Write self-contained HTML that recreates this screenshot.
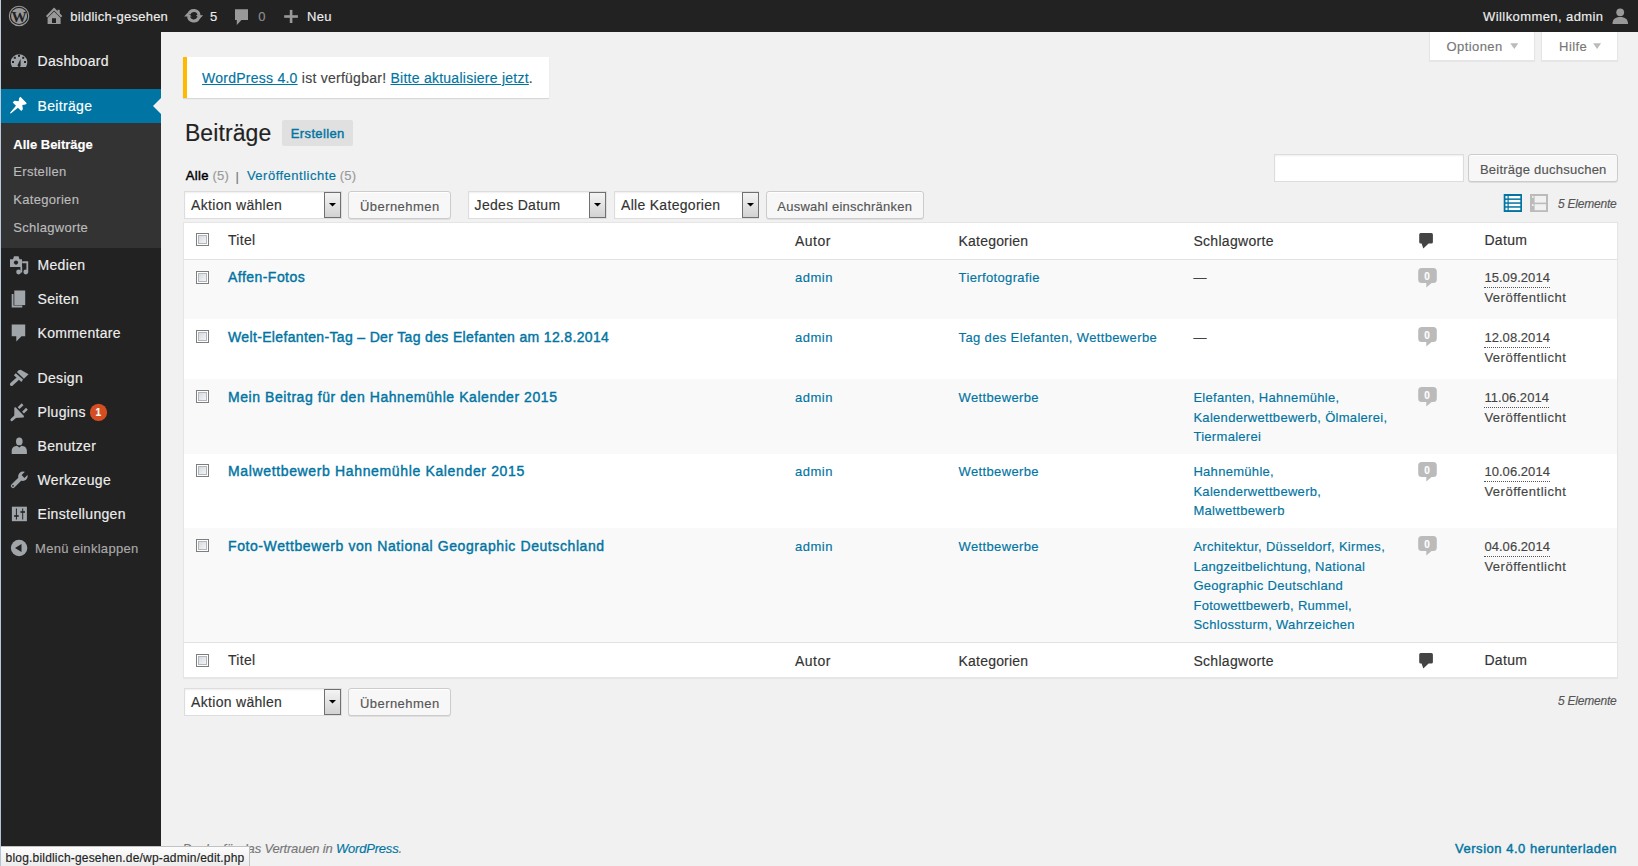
<!DOCTYPE html>
<html><head><meta charset="utf-8"><title>Beiträge</title>
<style>
html,body{margin:0;padding:0}
body{width:1638px;height:866px;overflow:hidden;position:relative;background:#f1f1f1;font-family:"Liberation Sans", sans-serif}
.r{position:absolute}
.t{position:absolute;line-height:1;white-space:nowrap;-webkit-text-stroke-width:0.15px}
.t a{color:#0074a2;text-decoration:none}
.u a{text-decoration:underline}
#ic{position:absolute;left:0;top:0}
#status{position:absolute;left:1px;top:846px;width:249px;height:20px;background:linear-gradient(#fcfcfc,#ececec);border-top:1px solid #c2c2c2;border-right:1px solid #c2c2c2;box-sizing:border-box}
</style></head><body>
<div class="r" style="left:0px;top:0px;width:1px;height:866px;background:linear-gradient(#bccadc,#b4c3d8)"></div><div class="r" style="left:1px;top:0px;width:1637px;height:32px;background:#222"></div><div class="r" style="left:1px;top:32px;width:160px;height:834px;background:#222"></div><div class="r" style="left:1px;top:89px;width:160px;height:34px;background:#0074a2"></div><div class="r" style="left:1px;top:123px;width:160px;height:125px;background:#333"></div><div class="r" style="left:1429px;top:32px;width:106px;height:29px;background:#fff;border:1px solid #e5e5e5;border-top:0;box-sizing:border-box;box-shadow:0 1px 1px rgba(0,0,0,.04)"></div><div class="r" style="left:1541px;top:32px;width:77px;height:29px;background:#fff;border:1px solid #e5e5e5;border-top:0;box-sizing:border-box;box-shadow:0 1px 1px rgba(0,0,0,.04)"></div><div class="r" style="left:183px;top:57px;width:366px;height:41px;background:#fff;border-left:4px solid #ffba00;box-sizing:border-box;box-shadow:0 1px 1px 0 rgba(0,0,0,.1)"></div><div class="r" style="left:282px;top:120px;width:71px;height:26px;background:#e0e0e0;border-radius:2px"></div><div class="r" style="left:1274px;top:154px;width:190px;height:28px;background:#fff;border:1px solid #ddd;box-sizing:border-box;box-shadow:inset 0 1px 2px rgba(0,0,0,.07)"></div><div class="r" style="left:1468px;top:154px;width:150px;height:28px;background:#f7f7f7;border:1px solid #ccc;border-radius:3px;box-sizing:border-box;box-shadow:inset 0 1px 0 #fff,0 1px 0 rgba(0,0,0,.08)"></div><div class="r" style="left:184px;top:191px;width:158px;height:28px;background:#fff;border:1px solid #ddd;box-sizing:border-box;box-shadow:inset 0 1px 2px rgba(0,0,0,.07)"></div><div class="r" style="left:324px;top:192px;width:17px;height:26px;background:linear-gradient(#f4f4f4,#d2d2d2);border:1px solid #707070;box-sizing:border-box"></div><div class="r" style="left:348px;top:191px;width:103px;height:28px;background:#f7f7f7;border:1px solid #ccc;border-radius:3px;box-sizing:border-box;box-shadow:inset 0 1px 0 #fff,0 1px 0 rgba(0,0,0,.08)"></div><div class="r" style="left:468px;top:191px;width:139px;height:28px;background:#fff;border:1px solid #ddd;box-sizing:border-box;box-shadow:inset 0 1px 2px rgba(0,0,0,.07)"></div><div class="r" style="left:589px;top:192px;width:17px;height:26px;background:linear-gradient(#f4f4f4,#d2d2d2);border:1px solid #707070;box-sizing:border-box"></div><div class="r" style="left:614px;top:191px;width:145px;height:28px;background:#fff;border:1px solid #ddd;box-sizing:border-box;box-shadow:inset 0 1px 2px rgba(0,0,0,.07)"></div><div class="r" style="left:742px;top:192px;width:17px;height:26px;background:linear-gradient(#f4f4f4,#d2d2d2);border:1px solid #707070;box-sizing:border-box"></div><div class="r" style="left:766px;top:191px;width:158px;height:28px;background:#f7f7f7;border:1px solid #ccc;border-radius:3px;box-sizing:border-box;box-shadow:inset 0 1px 0 #fff,0 1px 0 rgba(0,0,0,.08)"></div><div class="r" style="left:183px;top:222px;width:1435px;height:456px;background:#fff;border:1px solid #e5e5e5;box-sizing:border-box;box-shadow:0 1px 1px rgba(0,0,0,.04)"></div><div class="r" style="left:184px;top:259px;width:1433px;height:1px;background:#e1e1e1"></div><div class="r" style="left:184px;top:260px;width:1433px;height:59px;background:#f9f9f9"></div><div class="r" style="left:184px;top:379px;width:1433px;height:75px;background:#f9f9f9"></div><div class="r" style="left:184px;top:528px;width:1433px;height:114px;background:#f9f9f9"></div><div class="r" style="left:184px;top:642px;width:1433px;height:1px;background:#e1e1e1"></div><div class="r" style="left:184px;top:688px;width:158px;height:28px;background:#fff;border:1px solid #ddd;box-sizing:border-box;box-shadow:inset 0 1px 2px rgba(0,0,0,.07)"></div><div class="r" style="left:324px;top:689px;width:17px;height:26px;background:linear-gradient(#f4f4f4,#d2d2d2);border:1px solid #707070;box-sizing:border-box"></div><div class="r" style="left:348px;top:688px;width:103px;height:28px;background:#f7f7f7;border:1px solid #ccc;border-radius:3px;box-sizing:border-box;box-shadow:inset 0 1px 0 #fff,0 1px 0 rgba(0,0,0,.08)"></div>
<svg id="ic" width="1638" height="866" viewBox="0 0 1638 866">
<defs><linearGradient id="cbg" x1="0" y1="0" x2="1" y2="1"><stop offset="0" stop-color="#d4d8de"/><stop offset="1" stop-color="#f6f6f6"/></linearGradient></defs>
<circle cx="19.05" cy="15.9" r="9.7" fill="none" stroke="#999" stroke-width="1.1"/><circle cx="19.05" cy="15.9" r="8.0" fill="#999"/><text x="19.05" y="21.9" text-anchor="middle" font-family="Liberation Serif" font-weight="700" font-size="15.5" fill="#222" transform="translate(19.05 0) scale(0.98 1) translate(-19.05 0)">W</text><path d="M46.7 16.8 L54.1 9 L61.6 16.8" fill="none" stroke="#999" stroke-width="2"/><rect x="57.5" y="9.8" width="2.2" height="4.5" fill="#999"/><path d="M47.6 18 L54.1 11.6 L60.6 18 V24 H47.6 Z M52 18.2 V23 H56 V18.2 Z" fill="#999" fill-rule="evenodd"/><g fill="none" stroke="#999" stroke-width="3"><path d="M188.9 14.0 A5.2 5.2 0 0 1 199.0 15.4"/><path d="M198.7 17.6 A5.2 5.2 0 0 1 188.6 16.2"/></g><path d="M196.0 14.9 L203.1 15.2 L199.4 19.3 Z" fill="#999"/><path d="M184.2 16.6 L191.7 16.6 L187.6 12.8 Z" fill="#999"/><path d="M235 9.2 H248 V20 H241.5 L236.8 24.9 V20 H235 Z" fill="#999"/><rect x="289.8" y="9.9" width="2.6" height="13.1" fill="#999"/><rect x="284.2" y="15.2" width="13.7" height="2.6" fill="#999"/><circle cx="1620.2" cy="12.3" r="3.9" fill="#999"/><path d="M1612.5 24 C1612.5 19 1615.5 17 1620.2 17 C1625 17 1628 19 1628 24 Z" fill="#999"/><path d="M12.1 67.1 A8.3 8.3 0 1 1 26 67.1 Z" fill="#a0a5aa"/><rect x="18" y="54.8" width="2" height="2" fill="#222"/><rect x="13.8" y="56.8" width="2" height="2" fill="#222"/><rect x="22.2" y="56.8" width="2" height="2" fill="#222"/><rect x="12" y="61" width="2" height="2" fill="#222"/><rect x="24" y="61" width="2" height="2" fill="#222"/><path d="M20.6 58.8 L18 64.2 A1.6 1.6 0 1 0 20.6 64.8 Z" fill="#222"/><path d="M20.42 96.82 L19.15 98.09 L18.65 101.27 L14.41 100.71 L12.71 102.40 L15.96 105.66 L10.09 112.80 L10.24 113.36 L10.80 113.51 L17.94 107.64 L21.20 110.89 L22.89 109.19 L22.33 104.95 L25.51 104.45 L26.78 103.18 Z" fill="#fff"/><path d="M10 259.3 H13 L14 256.3 H18.5 L19.5 259.3 H22 V267 H10 Z" fill="#a0a5aa"/><circle cx="16" cy="262.6" r="2.1" fill="#222"/><path d="M22.2 261.3 H28.2 V272.5 H26.4 V263.2 H22.2 Z" fill="#a0a5aa"/><rect x="20.4" y="266.5" width="1.8" height="6" fill="#a0a5aa"/><circle cx="18.6" cy="272" r="2.4" fill="#a0a5aa"/><circle cx="25.8" cy="272" r="2.4" fill="#a0a5aa"/><rect x="14.3" y="290.5" width="10.9" height="14.6" fill="#a0a5aa"/><path d="M11.7 294 H13.5 V305.6 H22.3 V307.4 H11.7 Z" fill="#a0a5aa"/><path d="M11.7 324.4 H25.2 V336.3 H21.5 L16.3 341.4 V336.3 H11.7 Z" fill="#a0a5aa"/><path d="M16.9 372.1 L18.6 370.3 L20.6 369.8 L28.6 374.2 L23.9 378.7 Z" fill="#a0a5aa"/><path d="M15.8 373.3 L23.0 379.6 L21.4 381.9 L13.9 375.3 Z" fill="#a0a5aa"/><path d="M17.4 379 L11.6 384.3" stroke="#a0a5aa" stroke-width="3.3" stroke-linecap="round"/><path d="M14.3 407.6 L15.6 407.3 L24.0 416.1 L23.6 417.6 L14.3 417.9 Z" fill="#a0a5aa"/><path d="M15.3 416.6 L11.8 419.8" stroke="#a0a5aa" stroke-width="2.8" stroke-linecap="round"/><path d="M18.6 408.1 L22.6 404.3" stroke="#a0a5aa" stroke-width="2.6"/><path d="M23.0 412.6 L26.9 408.8" stroke="#a0a5aa" stroke-width="2.6"/><ellipse cx="19.3" cy="441.4" rx="3.3" ry="3.9" fill="#a0a5aa"/><path d="M11.7 454 V451 C11.7 447.5 14.5 446 17 445.8 L19.3 447.5 L21.6 445.8 C24.2 446 26.9 447.5 26.9 451 V454 Z" fill="#a0a5aa"/><path d="M21.5 477.6 L12.9 485.9" stroke="#a0a5aa" stroke-width="4.2" stroke-linecap="round"/><circle cx="22.9" cy="476.2" r="4.7" fill="#a0a5aa"/><path d="M21.6 475.1 L26.0 470.7 L28.9 473.6 L24.5 478.0 Z" fill="#222"/><circle cx="13.0" cy="485.8" r="0.9" fill="#222"/><rect x="11.9" y="506.7" width="15" height="14.5" fill="#a0a5aa"/><rect x="15.9" y="508.5" width="1" height="11" fill="#222"/><rect x="14.1" y="515.2" width="4.6" height="1.6" fill="#222"/><rect x="22.2" y="508.5" width="1" height="11" fill="#222"/><rect x="20.4" y="511.2" width="4.6" height="1.6" fill="#222"/><circle cx="19.1" cy="548" r="8.2" fill="#a0a5aa"/><path d="M15 548 L21.5 544 V552 Z" fill="#222"/><path d="M161 98 V114 L153 106 Z" fill="#f1f1f1"/><circle cx="98.5" cy="412.4" r="8.6" fill="#d54e21"/><path d="M1510.3 43.3 H1518.3 L1514.3 48.9 Z" fill="#bbb"/><path d="M1593.1 43.3 H1601.1 L1597.1 48.9 Z" fill="#bbb"/><path d="M329 203 H336 L332.5 206.5 Z" fill="#000"/><path d="M594 203 H601 L597.5 206.5 Z" fill="#000"/><path d="M747 203 H754 L750.5 206.5 Z" fill="#000"/><path d="M329 700 H336 L332.5 703.5 Z" fill="#000"/><rect x="1503.7" y="194" width="18.3" height="18" fill="#0074a2"/><rect x="1505.5" y="196.0" width="2" height="2.4" fill="#fff"/><rect x="1508.7" y="196.0" width="11.6" height="2.4" fill="#fff"/><rect x="1505.5" y="199.9" width="2" height="2.4" fill="#fff"/><rect x="1508.7" y="199.9" width="11.6" height="2.4" fill="#fff"/><rect x="1505.5" y="203.8" width="2" height="2.4" fill="#fff"/><rect x="1508.7" y="203.8" width="11.6" height="2.4" fill="#fff"/><rect x="1505.5" y="207.7" width="2" height="2.4" fill="#fff"/><rect x="1508.7" y="207.7" width="11.6" height="2.4" fill="#fff"/><rect x="1530" y="194" width="18" height="18" fill="#bbb"/><rect x="1534.6" y="196" width="11.4" height="6.6" fill="#f1f1f1"/><rect x="1534.6" y="204.2" width="11.4" height="6" fill="#f1f1f1"/><rect x="1532" y="196" width="1.6" height="1.8" fill="#f1f1f1"/><rect x="1532" y="204.2" width="1.6" height="1.8" fill="#f1f1f1"/><rect x="196.5" y="233.5" width="12" height="12" fill="#fff" stroke="#7e7e7e" stroke-width="1"/><rect x="198.5" y="235.5" width="8" height="8" fill="url(#cbg)" stroke="#b2b7bd" stroke-width="1"/><rect x="196.5" y="271.5" width="12" height="12" fill="#fff" stroke="#7e7e7e" stroke-width="1"/><rect x="198.5" y="273.5" width="8" height="8" fill="url(#cbg)" stroke="#b2b7bd" stroke-width="1"/><rect x="196.5" y="330.5" width="12" height="12" fill="#fff" stroke="#7e7e7e" stroke-width="1"/><rect x="198.5" y="332.5" width="8" height="8" fill="url(#cbg)" stroke="#b2b7bd" stroke-width="1"/><rect x="196.5" y="390.5" width="12" height="12" fill="#fff" stroke="#7e7e7e" stroke-width="1"/><rect x="198.5" y="392.5" width="8" height="8" fill="url(#cbg)" stroke="#b2b7bd" stroke-width="1"/><rect x="196.5" y="464.5" width="12" height="12" fill="#fff" stroke="#7e7e7e" stroke-width="1"/><rect x="198.5" y="466.5" width="8" height="8" fill="url(#cbg)" stroke="#b2b7bd" stroke-width="1"/><rect x="196.5" y="539.5" width="12" height="12" fill="#fff" stroke="#7e7e7e" stroke-width="1"/><rect x="198.5" y="541.5" width="8" height="8" fill="url(#cbg)" stroke="#b2b7bd" stroke-width="1"/><rect x="196.5" y="654.5" width="12" height="12" fill="#fff" stroke="#7e7e7e" stroke-width="1"/><rect x="198.5" y="656.5" width="8" height="8" fill="url(#cbg)" stroke="#b2b7bd" stroke-width="1"/><path d="M1420.7 233 H1431.4 Q1432.9 233 1432.9 234.5 V242.1 Q1432.9 243.6 1431.4 243.6 H1428.6 L1423.3 248.5 L1421.6 243.6 H1420.7 Q1419.2 243.6 1419.2 242.1 V234.5 Q1419.2 233 1420.7 233 Z" fill="#444"/><path d="M1420.7 653 H1431.4 Q1432.9 653 1432.9 654.5 V662.1 Q1432.9 663.6 1431.4 663.6 H1428.6 L1423.3 668.5 L1421.6 663.6 H1420.7 Q1419.2 663.6 1419.2 662.1 V654.5 Q1419.2 653 1420.7 653 Z" fill="#444"/><path d="M1421.7 268.0 H1433.3 Q1436.8 268.0 1436.8 271.5 V279.5 Q1436.8 283.0 1433.3 283.0 H1431.6 L1426.3 287.6 V283.0 H1421.7 Q1418.2 283.0 1418.2 279.5 V271.5 Q1418.2 268.0 1421.7 268.0 Z" fill="#bbb"/><path d="M1421.7 327.0 H1433.3 Q1436.8 327.0 1436.8 330.5 V338.5 Q1436.8 342.0 1433.3 342.0 H1431.6 L1426.3 346.6 V342.0 H1421.7 Q1418.2 342.0 1418.2 338.5 V330.5 Q1418.2 327.0 1421.7 327.0 Z" fill="#bbb"/><path d="M1421.7 387.0 H1433.3 Q1436.8 387.0 1436.8 390.5 V398.5 Q1436.8 402.0 1433.3 402.0 H1431.6 L1426.3 406.6 V402.0 H1421.7 Q1418.2 402.0 1418.2 398.5 V390.5 Q1418.2 387.0 1421.7 387.0 Z" fill="#bbb"/><path d="M1421.7 462.0 H1433.3 Q1436.8 462.0 1436.8 465.5 V473.5 Q1436.8 477.0 1433.3 477.0 H1431.6 L1426.3 481.6 V477.0 H1421.7 Q1418.2 477.0 1418.2 473.5 V465.5 Q1418.2 462.0 1421.7 462.0 Z" fill="#bbb"/><path d="M1421.7 536.0 H1433.3 Q1436.8 536.0 1436.8 539.5 V547.5 Q1436.8 551.0 1433.3 551.0 H1431.6 L1426.3 555.6 V551.0 H1421.7 Q1418.2 551.0 1418.2 547.5 V539.5 Q1418.2 536.0 1421.7 536.0 Z" fill="#bbb"/>
</svg>
<div class="t " style="left:70.3px;top:9.70px;font-size:13px;color:#eee;font-weight:400;font-style:normal;letter-spacing:0.24px;">bildlich-gesehen</div><div class="t " style="left:210.0px;top:10.30px;font-size:13px;color:#eee;font-weight:400;font-style:normal;letter-spacing:0px;">5</div><div class="t " style="left:258.2px;top:10.30px;font-size:13px;color:#8c8f94;font-weight:400;font-style:normal;letter-spacing:0px;">0</div><div class="t " style="left:307.0px;top:10.30px;font-size:13px;color:#eee;font-weight:400;font-style:normal;letter-spacing:0.3px;">Neu</div><div class="t " style="left:1483.1px;top:10.10px;font-size:13px;color:#eee;font-weight:400;font-style:normal;letter-spacing:0.41px;">Willkommen, admin</div><div class="t " style="left:37.5px;top:53.95px;font-size:14px;color:#eee;font-weight:400;font-style:normal;letter-spacing:0.33px;">Dashboard</div><div class="t " style="left:37.5px;top:98.95px;font-size:14px;color:#fff;font-weight:400;font-style:normal;letter-spacing:0.33px;">Beiträge</div><div class="t " style="left:37.5px;top:258.15px;font-size:14px;color:#eee;font-weight:400;font-style:normal;letter-spacing:0.33px;">Medien</div><div class="t " style="left:37.5px;top:292.15px;font-size:14px;color:#eee;font-weight:400;font-style:normal;letter-spacing:0.33px;">Seiten</div><div class="t " style="left:37.5px;top:326.15px;font-size:14px;color:#eee;font-weight:400;font-style:normal;letter-spacing:0.33px;">Kommentare</div><div class="t " style="left:37.5px;top:371.15px;font-size:14px;color:#eee;font-weight:400;font-style:normal;letter-spacing:0.33px;">Design</div><div class="t " style="left:37.5px;top:405.15px;font-size:14px;color:#eee;font-weight:400;font-style:normal;letter-spacing:0.33px;">Plugins</div><div class="t " style="left:37.5px;top:439.15px;font-size:14px;color:#eee;font-weight:400;font-style:normal;letter-spacing:0.33px;">Benutzer</div><div class="t " style="left:37.5px;top:473.15px;font-size:14px;color:#eee;font-weight:400;font-style:normal;letter-spacing:0.33px;">Werkzeuge</div><div class="t " style="left:37.5px;top:507.15px;font-size:14px;color:#eee;font-weight:400;font-style:normal;letter-spacing:0.33px;">Einstellungen</div><div class="t " style="left:13.3px;top:138.00px;font-size:13px;color:#fff;font-weight:700;font-style:normal;letter-spacing:0px;">Alle Beiträge</div><div class="t " style="left:13.3px;top:165.00px;font-size:13px;color:#bbb;font-weight:400;font-style:normal;letter-spacing:0.3px;">Erstellen</div><div class="t " style="left:13.3px;top:193.00px;font-size:13px;color:#bbb;font-weight:400;font-style:normal;letter-spacing:0.3px;">Kategorien</div><div class="t " style="left:13.3px;top:220.90px;font-size:13px;color:#bbb;font-weight:400;font-style:normal;letter-spacing:0.3px;">Schlagworte</div><div class="t " style="left:35.0px;top:542.00px;font-size:13px;color:#aaa;font-weight:400;font-style:normal;letter-spacing:0.3px;">Menü einklappen</div><div class="t " style="left:1446.6px;top:39.90px;font-size:13px;color:#777;font-weight:400;font-style:normal;letter-spacing:0.4px;">Optionen</div><div class="t " style="left:1559.1px;top:39.90px;font-size:13px;color:#777;font-weight:400;font-style:normal;letter-spacing:0.4px;">Hilfe</div><div class="t u" style="left:202.0px;top:70.75px;font-size:14px;color:#444;font-weight:400;font-style:normal;letter-spacing:0.255px;"><a>WordPress 4.0</a> ist verfügbar! <a>Bitte aktualisiere jetzt</a>.</div><div class="t " style="left:184.9px;top:121.63px;font-size:23px;color:#222;font-weight:400;font-style:normal;letter-spacing:0.09px;">Beiträge</div><div class="t " style="left:290.8px;top:126.80px;font-size:13px;color:#0074a2;font-weight:400;font-style:normal;letter-spacing:0.36px;-webkit-text-stroke-width:0.4px">Erstellen</div><div class="t " style="left:185.7px;top:168.60px;font-size:13px;color:#000;font-weight:400;font-style:normal;letter-spacing:0.35px;-webkit-text-stroke-width:0.45px">Alle</div><div class="t " style="left:212.4px;top:168.60px;font-size:13px;color:#999;font-weight:400;font-style:normal;letter-spacing:0.3px;">(5)</div><div class="t " style="left:235.6px;top:169.60px;font-size:13px;color:#777;font-weight:400;font-style:normal;letter-spacing:0px;">|</div><div class="t " style="left:246.9px;top:168.60px;font-size:13px;color:#0074a2;font-weight:400;font-style:normal;letter-spacing:0.5px;">Veröffentlichte</div><div class="t " style="left:339.7px;top:168.60px;font-size:13px;color:#999;font-weight:400;font-style:normal;letter-spacing:0.3px;">(5)</div><div class="t " style="left:191.1px;top:197.85px;font-size:14px;color:#333;font-weight:400;font-style:normal;letter-spacing:0.3px;">Aktion wählen</div><div class="t " style="left:360.0px;top:199.60px;font-size:13px;color:#555;font-weight:400;font-style:normal;letter-spacing:0.44px;">Übernehmen</div><div class="t " style="left:474.6px;top:197.85px;font-size:14px;color:#333;font-weight:400;font-style:normal;letter-spacing:0.3px;">Jedes Datum</div><div class="t " style="left:621.0px;top:197.85px;font-size:14px;color:#333;font-weight:400;font-style:normal;letter-spacing:0.3px;">Alle Kategorien</div><div class="t " style="left:777.3px;top:199.60px;font-size:13px;color:#555;font-weight:400;font-style:normal;letter-spacing:0.24px;">Auswahl einschränken</div><div class="t " style="left:1479.9px;top:163.00px;font-size:13px;color:#555;font-weight:400;font-style:normal;letter-spacing:0.24px;">Beiträge duchsuchen</div><div class="t " style="left:1557.9px;top:197.74px;font-size:12px;color:#555;font-weight:400;font-style:italic;letter-spacing:-0.2px;">5 Elemente</div><div class="t " style="left:228.0px;top:233.15px;font-size:14px;color:#333;font-weight:400;font-style:normal;letter-spacing:0.3px;">Titel</div><div class="t " style="left:795.0px;top:234.05px;font-size:14px;color:#333;font-weight:400;font-style:normal;letter-spacing:0.5px;">Autor</div><div class="t " style="left:958.6px;top:234.05px;font-size:14px;color:#333;font-weight:400;font-style:normal;letter-spacing:0.19px;">Kategorien</div><div class="t " style="left:1193.4px;top:234.05px;font-size:14px;color:#333;font-weight:400;font-style:normal;letter-spacing:0.3px;">Schlagworte</div><div class="t " style="left:1484.4px;top:233.15px;font-size:14px;color:#333;font-weight:400;font-style:normal;letter-spacing:0.35px;">Datum</div><div class="t " style="left:228.0px;top:652.75px;font-size:14px;color:#333;font-weight:400;font-style:normal;letter-spacing:0.3px;">Titel</div><div class="t " style="left:795.0px;top:653.65px;font-size:14px;color:#333;font-weight:400;font-style:normal;letter-spacing:0.5px;">Autor</div><div class="t " style="left:958.6px;top:653.65px;font-size:14px;color:#333;font-weight:400;font-style:normal;letter-spacing:0.19px;">Kategorien</div><div class="t " style="left:1193.4px;top:653.65px;font-size:14px;color:#333;font-weight:400;font-style:normal;letter-spacing:0.3px;">Schlagworte</div><div class="t " style="left:1484.4px;top:652.75px;font-size:14px;color:#333;font-weight:400;font-style:normal;letter-spacing:0.35px;">Datum</div><div class="t " style="left:228.0px;top:270.35px;font-size:14px;color:#0074a2;font-weight:400;font-style:normal;letter-spacing:0.461px;-webkit-text-stroke-width:0.4px">Affen-Fotos</div><div class="t " style="left:795.0px;top:271.20px;font-size:13px;color:#0074a2;font-weight:400;font-style:normal;letter-spacing:0.5px;">admin</div><div class="t " style="left:958.6px;top:271.20px;font-size:13px;color:#0074a2;font-weight:400;font-style:normal;letter-spacing:0.36px;"><a>Tierfotografie</a></div><div class="t " style="left:1193.4px;top:271.20px;font-size:13px;color:#444;font-weight:400;font-style:normal;letter-spacing:0.3px;">—</div><div class="t " style="left:1484.4px;top:271.20px;font-size:13px;color:#444;font-weight:400;font-style:normal;letter-spacing:0.05px;"><span style="border-bottom:1px dotted #555;padding-bottom:2px">15.09.2014</span></div><div class="t " style="left:1484.4px;top:290.80px;font-size:13px;color:#444;font-weight:400;font-style:normal;letter-spacing:0.5px;">Veröffentlicht</div><div class="t " style="left:1424.2px;top:272.04px;font-size:10px;color:#fff;font-weight:700;font-style:normal;letter-spacing:0px;">0</div><div class="t " style="left:228.0px;top:330.35px;font-size:14px;color:#0074a2;font-weight:400;font-style:normal;letter-spacing:0.346px;-webkit-text-stroke-width:0.4px">Welt-Elefanten-Tag – Der Tag des Elefanten am 12.8.2014</div><div class="t " style="left:795.0px;top:331.20px;font-size:13px;color:#0074a2;font-weight:400;font-style:normal;letter-spacing:0.5px;">admin</div><div class="t " style="left:958.6px;top:331.20px;font-size:13px;color:#0074a2;font-weight:400;font-style:normal;letter-spacing:0.36px;"><a>Tag des Elefanten</a>, <a>Wettbewerbe</a></div><div class="t " style="left:1193.4px;top:331.20px;font-size:13px;color:#444;font-weight:400;font-style:normal;letter-spacing:0.3px;">—</div><div class="t " style="left:1484.4px;top:331.20px;font-size:13px;color:#444;font-weight:400;font-style:normal;letter-spacing:0.05px;"><span style="border-bottom:1px dotted #555;padding-bottom:2px">12.08.2014</span></div><div class="t " style="left:1484.4px;top:350.80px;font-size:13px;color:#444;font-weight:400;font-style:normal;letter-spacing:0.5px;">Veröffentlicht</div><div class="t " style="left:1424.2px;top:331.04px;font-size:10px;color:#fff;font-weight:700;font-style:normal;letter-spacing:0px;">0</div><div class="t " style="left:228.0px;top:390.35px;font-size:14px;color:#0074a2;font-weight:400;font-style:normal;letter-spacing:0.56px;-webkit-text-stroke-width:0.4px">Mein Beitrag für den Hahnemühle Kalender 2015</div><div class="t " style="left:795.0px;top:391.20px;font-size:13px;color:#0074a2;font-weight:400;font-style:normal;letter-spacing:0.5px;">admin</div><div class="t " style="left:958.6px;top:391.20px;font-size:13px;color:#0074a2;font-weight:400;font-style:normal;letter-spacing:0.36px;"><a>Wettbewerbe</a></div><div class="t " style="left:1193.4px;top:391.20px;font-size:13px;color:#0074a2;font-weight:400;font-style:normal;letter-spacing:0.3px;">Elefanten, Hahnemühle,</div><div class="t " style="left:1193.4px;top:410.70px;font-size:13px;color:#0074a2;font-weight:400;font-style:normal;letter-spacing:0.3px;">Kalenderwettbewerb, Ölmalerei,</div><div class="t " style="left:1193.4px;top:430.20px;font-size:13px;color:#0074a2;font-weight:400;font-style:normal;letter-spacing:0.3px;">Tiermalerei</div><div class="t " style="left:1484.4px;top:391.20px;font-size:13px;color:#444;font-weight:400;font-style:normal;letter-spacing:0.05px;"><span style="border-bottom:1px dotted #555;padding-bottom:2px">11.06.2014</span></div><div class="t " style="left:1484.4px;top:410.80px;font-size:13px;color:#444;font-weight:400;font-style:normal;letter-spacing:0.5px;">Veröffentlicht</div><div class="t " style="left:1424.2px;top:391.04px;font-size:10px;color:#fff;font-weight:700;font-style:normal;letter-spacing:0px;">0</div><div class="t " style="left:228.0px;top:464.45px;font-size:14px;color:#0074a2;font-weight:400;font-style:normal;letter-spacing:0.645px;-webkit-text-stroke-width:0.4px">Malwettbewerb Hahnemühle Kalender 2015</div><div class="t " style="left:795.0px;top:465.30px;font-size:13px;color:#0074a2;font-weight:400;font-style:normal;letter-spacing:0.5px;">admin</div><div class="t " style="left:958.6px;top:465.30px;font-size:13px;color:#0074a2;font-weight:400;font-style:normal;letter-spacing:0.36px;"><a>Wettbewerbe</a></div><div class="t " style="left:1193.4px;top:465.30px;font-size:13px;color:#0074a2;font-weight:400;font-style:normal;letter-spacing:0.3px;">Hahnemühle,</div><div class="t " style="left:1193.4px;top:484.80px;font-size:13px;color:#0074a2;font-weight:400;font-style:normal;letter-spacing:0.3px;">Kalenderwettbewerb,</div><div class="t " style="left:1193.4px;top:504.30px;font-size:13px;color:#0074a2;font-weight:400;font-style:normal;letter-spacing:0.3px;">Malwettbewerb</div><div class="t " style="left:1484.4px;top:465.30px;font-size:13px;color:#444;font-weight:400;font-style:normal;letter-spacing:0.05px;"><span style="border-bottom:1px dotted #555;padding-bottom:2px">10.06.2014</span></div><div class="t " style="left:1484.4px;top:484.90px;font-size:13px;color:#444;font-weight:400;font-style:normal;letter-spacing:0.5px;">Veröffentlicht</div><div class="t " style="left:1424.2px;top:466.04px;font-size:10px;color:#fff;font-weight:700;font-style:normal;letter-spacing:0px;">0</div><div class="t " style="left:228.0px;top:539.45px;font-size:14px;color:#0074a2;font-weight:400;font-style:normal;letter-spacing:0.586px;-webkit-text-stroke-width:0.4px">Foto-Wettbewerb von National Geographic Deutschland</div><div class="t " style="left:795.0px;top:540.30px;font-size:13px;color:#0074a2;font-weight:400;font-style:normal;letter-spacing:0.5px;">admin</div><div class="t " style="left:958.6px;top:540.30px;font-size:13px;color:#0074a2;font-weight:400;font-style:normal;letter-spacing:0.36px;"><a>Wettbewerbe</a></div><div class="t " style="left:1193.4px;top:540.30px;font-size:13px;color:#0074a2;font-weight:400;font-style:normal;letter-spacing:0.3px;">Architektur, Düsseldorf, Kirmes,</div><div class="t " style="left:1193.4px;top:559.80px;font-size:13px;color:#0074a2;font-weight:400;font-style:normal;letter-spacing:0.3px;">Langzeitbelichtung, National</div><div class="t " style="left:1193.4px;top:579.30px;font-size:13px;color:#0074a2;font-weight:400;font-style:normal;letter-spacing:0.3px;">Geographic Deutschland</div><div class="t " style="left:1193.4px;top:598.80px;font-size:13px;color:#0074a2;font-weight:400;font-style:normal;letter-spacing:0.3px;">Fotowettbewerb, Rummel,</div><div class="t " style="left:1193.4px;top:618.30px;font-size:13px;color:#0074a2;font-weight:400;font-style:normal;letter-spacing:0.3px;">Schlossturm, Wahrzeichen</div><div class="t " style="left:1484.4px;top:540.30px;font-size:13px;color:#444;font-weight:400;font-style:normal;letter-spacing:0.05px;"><span style="border-bottom:1px dotted #555;padding-bottom:2px">04.06.2014</span></div><div class="t " style="left:1484.4px;top:559.90px;font-size:13px;color:#444;font-weight:400;font-style:normal;letter-spacing:0.5px;">Veröffentlicht</div><div class="t " style="left:1424.2px;top:540.03px;font-size:10px;color:#fff;font-weight:700;font-style:normal;letter-spacing:0px;">0</div><div class="t " style="left:1557.9px;top:694.74px;font-size:12px;color:#555;font-weight:400;font-style:italic;letter-spacing:-0.2px;">5 Elemente</div><div class="t " style="left:191.1px;top:694.85px;font-size:14px;color:#333;font-weight:400;font-style:normal;letter-spacing:0.3px;">Aktion wählen</div><div class="t " style="left:360.0px;top:696.60px;font-size:13px;color:#555;font-weight:400;font-style:normal;letter-spacing:0.44px;">Übernehmen</div><div class="t " style="left:95.6px;top:407.54px;font-size:10px;color:#fff;font-weight:700;font-style:normal;letter-spacing:0px;">1</div><div class="t " style="left:182.5px;top:841.60px;font-size:13px;color:#777;font-weight:400;font-style:italic;letter-spacing:-0.19px;">Danke für das Vertrauen in <a>WordPress</a>.</div><div class="t " style="left:1455.0px;top:841.70px;font-size:13px;color:#0074a2;font-weight:400;font-style:normal;letter-spacing:0.53px;-webkit-text-stroke-width:0.4px">Version 4.0 herunterladen</div>
<div id="status"></div>
<div class="t" style="left:5.6px;top:852.24px;font-size:12px;color:#222;letter-spacing:0.19px">blog.bildlich-gesehen.de/wp-admin/edit.php</div>
</body></html>
